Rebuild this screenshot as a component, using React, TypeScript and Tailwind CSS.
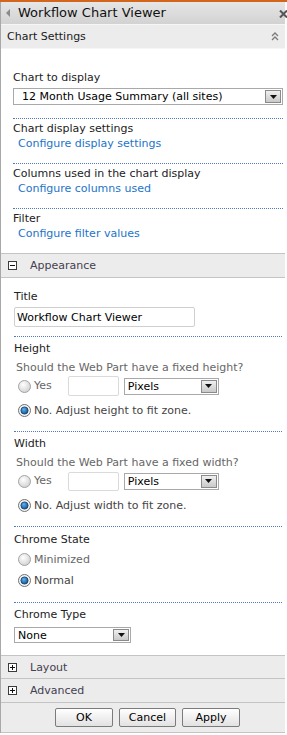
import React from "react";

const Dotted = () => <div className="h-0 border-t border-dotted border-[#4f79c4]" />;

const Select = ({ text, w, h, pad }: { text: string; w: string; h: string; pad: string }) => (
  <div className={`flex items-stretch border border-[#a9a9a9] bg-white ${w} ${h}`}>
    <div className={`flex-1 ${pad} text-[11px] leading-[15px] text-black flex items-center overflow-hidden whitespace-nowrap`}>{text}</div>
    <div className="m-[1px] w-[16px] border border-[#8a8a8a] bg-gradient-to-b from-[#f0f0f0] to-[#c9c9c9] flex items-center justify-center">
      <svg width="7" height="4" viewBox="0 0 7 4"><path d="M0 0H7L3.5 4Z" fill="#111" /></svg>
    </div>
  </div>
);

const Radio = ({ checked }: { checked?: boolean }) => (
  <svg width="13" height="13" viewBox="0 0 13 13" className="shrink-0">
    <defs>
      <radialGradient id="ug" cx="0.4" cy="0.35" r="0.7">
        <stop offset="0" stopColor="#ffffff" />
        <stop offset="1" stopColor="#cfcfcf" />
      </radialGradient>
      <radialGradient id="bg" cx="0.4" cy="0.35" r="0.7">
        <stop offset="0" stopColor="#5fb2f0" />
        <stop offset="1" stopColor="#0a4f8f" />
      </radialGradient>
    </defs>
    {checked ? (
      <>
        <circle cx="6.5" cy="6.5" r="6" fill="#f4f4f4" stroke="#707070" />
        <circle cx="6.5" cy="6.5" r="3.6" fill="url(#bg)" stroke="#123b66" strokeWidth="0.8" />
      </>
    ) : (
      <circle cx="6.5" cy="6.5" r="6" fill="url(#ug)" stroke="#a3a3a3" />
    )}
  </svg>
);

const Header = ({ sign, label, h }: { sign: string; label: string; h: string }) => (
  <div className={`flex items-center bg-[#ececec] border-b border-[#c4c4c4] ${h}`}>
    <div className="ml-[7px] w-[9px] h-[9px] border border-[#3b3b3b] bg-white flex items-center justify-center">
      <svg width="7" height="7" viewBox="0 0 7 7">
        <path d="M1 3.5H6" stroke="#111" strokeWidth="1" />
        {sign === "+" && <path d="M3.5 1V6" stroke="#111" strokeWidth="1" />}
      </svg>
    </div>
    <span className="ml-[13px] text-[11px] text-[#45404f]">{label}</span>
  </div>
);

const Button = ({ label, w }: { label: string; w: string }) => (
  <div className={`h-[19px] ${w} rounded-[2px] border border-[#7b7b7b] bg-gradient-to-b from-[#ffffff] to-[#e2e2e2] flex items-center justify-center text-[11px] text-black`}>
    {label}
  </div>
);

export default function App() {
  return (
    <div className="w-[287px] h-[735px] bg-white font-['DejaVu_Sans',sans-serif] text-[11px] leading-[15px] text-[#222] overflow-hidden">
      <div className="h-[2px] bg-[#d3661d]" />
      <div className="w-[285px] border-l border-[#a8a8a8]">
        {/* title bar */}
        <div className="h-[22px] bg-gradient-to-b from-[#e6e6e6] to-[#d2d2d2] flex items-center relative">
          <svg width="4" height="8" viewBox="0 0 4 8" className="ml-[5px]"><path d="M4 0V8L0 4Z" fill="#8a8a8a" /></svg>
          <span className="ml-[8px] text-[13px] leading-[18px] text-[#111]">Workflow Chart Viewer</span>
          <svg width="9" height="8" viewBox="0 0 9 8" className="absolute left-[278px] top-[8px]">
            <path d="M1 0.5L8 7.5M8 0.5L1 7.5" stroke="#555" strokeWidth="2" />
          </svg>
        </div>
        {/* Chart settings header */}
        <div className="h-[25px] bg-[#ececec] border-t border-[#f6f6f6] border-b border-[#c4c4c4] flex items-center justify-between">
          <span className="ml-[6px] text-[11px] text-[#1a1a1a]">Chart Settings</span>
          <svg width="8" height="9" viewBox="0 0 8 9" className="mr-[6px]">
            <path d="M1 4L4 1L7 4M1 8L4 5L7 8" stroke="#7a7a7a" strokeWidth="1.3" fill="none" />
          </svg>
        </div>
        {/* chart settings body */}
        <div className="pl-[12px] pr-[2px]">
          <div className="pt-[21px] pb-[13px]">
            <div>Chart to display</div>
            <div className="mt-[3px]">
              <Select text="12 Month Usage Summary (all sites)" w="w-[270px]" h="h-[17px]" pad="pl-[8px]" />
            </div>
          </div>
          <Dotted />
          <div className="pt-[2px] pb-[12px]">
            <div>Chart display settings</div>
            <div className="pl-[5px] text-[#1b74c9]">Configure display settings</div>
          </div>
          <Dotted />
          <div className="pt-[2px] pb-[12px]">
            <div>Columns used in the chart display</div>
            <div className="pl-[5px] text-[#1b74c9]">Configure columns used</div>
          </div>
          <Dotted />
          <div className="pt-[2px] pb-[12px]">
            <div>Filter</div>
            <div className="pl-[5px] text-[#1b74c9]">Configure filter values</div>
          </div>
        </div>
        {/* Appearance */}
        <div className="border-t border-[#c4c4c4]">
          <Header sign="-" label="Appearance" h="h-[24px]" />
        </div>
        <div className="pl-[13px] pr-[3px]">
          <div className="pt-[11px] pb-[9px]">
            <div>Title</div>
            <div className="mt-[3px] w-[181px] h-[20px] border border-[#cfcfcf] rounded-[2px] flex items-center pl-[2px] text-black">
              Workflow Chart Viewer
            </div>
          </div>
          <Dotted />
          <div className="pt-[4px] pb-[13px]">
            <div>Height</div>
            <div className="mt-[4px] pl-[2px] text-[#666]">Should the Web Part have a fixed height?</div>
            <div className="mt-[1px] h-[20px] flex items-center pl-[4px]">
              <Radio />
              <span className="ml-[3px] text-[#666] -mt-[2px]">Yes</span>
              <div className="ml-[16px] w-[51px] h-[20px] border border-[#dadada] rounded-[2px]" />
              <div className="ml-[5px]"><Select text="Pixels" w="w-[95px]" h="h-[17px]" pad="pl-[3px]" /></div>
            </div>
            <div className="mt-[7px] h-[15px] flex items-center pl-[4px]">
              <Radio checked />
              <span className="ml-[3px] text-[#444]">No. Adjust height to fit zone.</span>
            </div>
          </div>
          <Dotted />
          <div className="pt-[4px] pb-[13px]">
            <div>Width</div>
            <div className="mt-[4px] pl-[2px] text-[#666]">Should the Web Part have a fixed width?</div>
            <div className="mt-[1px] h-[20px] flex items-center pl-[4px]">
              <Radio />
              <span className="ml-[3px] text-[#666] -mt-[2px]">Yes</span>
              <div className="ml-[16px] w-[51px] h-[19px] border border-[#dadada] rounded-[2px]" />
              <div className="ml-[5px]"><Select text="Pixels" w="w-[95px]" h="h-[17px]" pad="pl-[3px]" /></div>
            </div>
            <div className="mt-[7px] h-[15px] flex items-center pl-[4px]">
              <Radio checked />
              <span className="ml-[3px] text-[#444]">No. Adjust width to fit zone.</span>
            </div>
          </div>
          <Dotted />
          <div className="pt-[5px] pb-[14px]">
            <div>Chrome State</div>
            <div className="mt-[5px] h-[15px] flex items-center pl-[4px]">
              <Radio />
              <span className="ml-[3px] text-[#666]">Minimized</span>
            </div>
            <div className="mt-[6px] h-[15px] flex items-center pl-[4px]">
              <Radio checked />
              <span className="ml-[3px] text-[#444]">Normal</span>
            </div>
          </div>
          <Dotted />
          <div className="pt-[4px] pb-[12px]">
            <div>Chrome Type</div>
            <div className="mt-[5px]">
              <Select text="None" w="w-[117px]" h="h-[16px]" pad="pl-[3px]" />
            </div>
          </div>
        </div>
        <div className="border-t border-[#c4c4c4]">
          <Header sign="+" label="Layout" h="h-[23px]" />
          <Header sign="+" label="Advanced" h="h-[24px]" />
        </div>
        <div className="h-[30px] bg-[#ececec] border-b border-[#c4c4c4] flex items-start pt-[5px]">
          <div className="ml-[54px]"><Button label="OK" w="w-[58px]" /></div>
          <div className="ml-[6px]"><Button label="Cancel" w="w-[57px]" /></div>
          <div className="ml-[6px]"><Button label="Apply" w="w-[58px]" /></div>
        </div>
      </div>
    </div>
  );
}
